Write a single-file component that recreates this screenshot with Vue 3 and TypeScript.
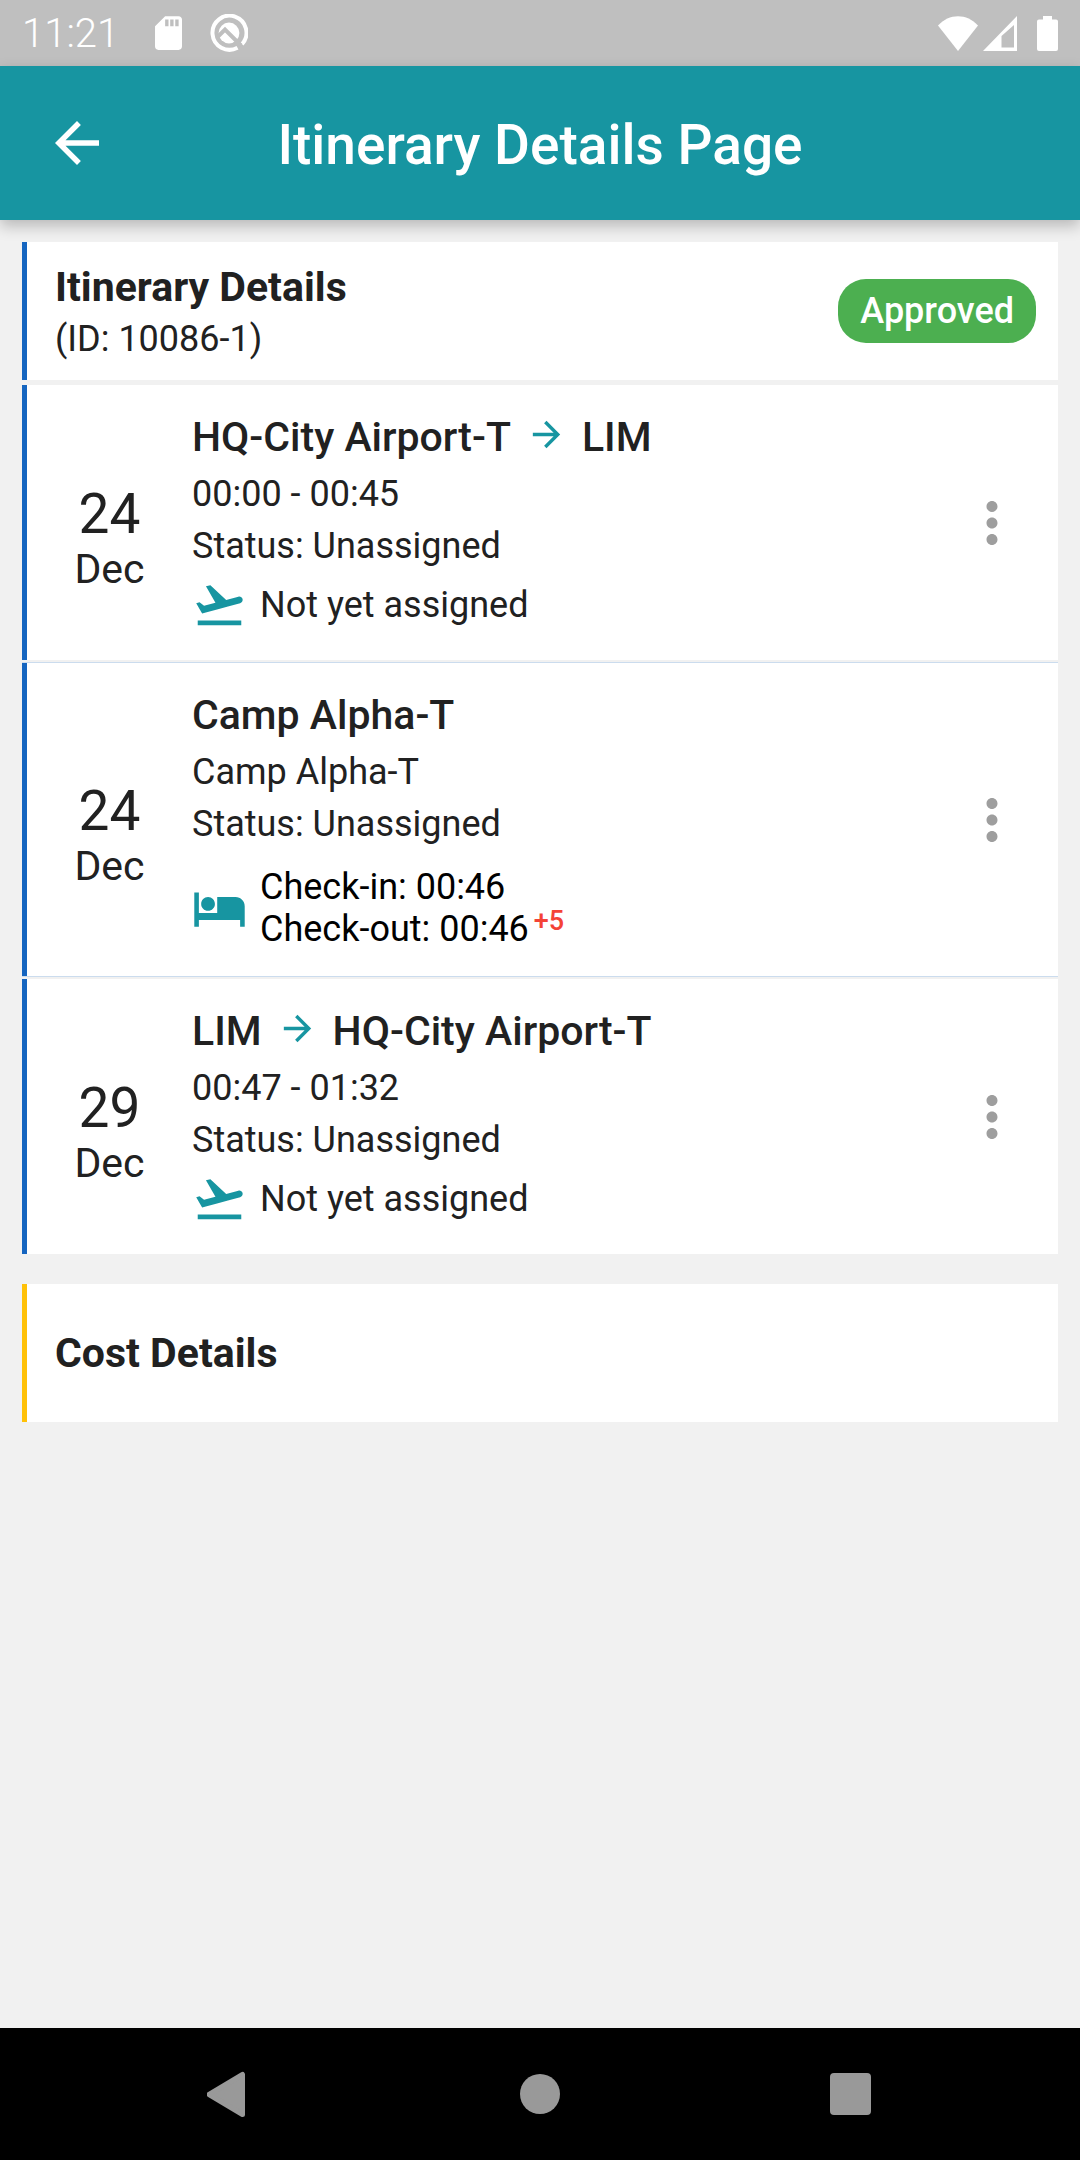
<script setup lang="ts">
interface Segment {
  kind: 'flight' | 'stay'
  day: string
  month: string
  from: string
  to?: string
  detail: string
  status: string
}

const segments: Segment[] = [
  { kind: 'flight', day: '24', month: 'Dec', from: 'HQ-City Airport-T', to: 'LIM', detail: '00:00 - 00:45', status: 'Unassigned' },
  { kind: 'stay', day: '24', month: 'Dec', from: 'Camp Alpha-T', detail: 'Camp Alpha-T', status: 'Unassigned' },
  { kind: 'flight', day: '29', month: 'Dec', from: 'LIM', to: 'HQ-City Airport-T', detail: '00:47 - 01:32', status: 'Unassigned' },
]
</script>

<template>
  <div class="screen">
    <div class="status-bar">
      <span class="clock">11:21</span>
      <svg class="sd" viewBox="4 2 16 20" aria-hidden="true">
        <path d="M18 2h-8L4.02 8 4 20c0 1.1.9 2 2 2h12c1.1 0 2-.9 2-2V4c0-1.1-.9-2-2-2zm-6 6h-2V4h2v4zm3 0h-2V4h2v4zm3 0h-2V4h2v4z" />
      </svg>
      <svg class="sync" viewBox="0 0 38 38" aria-hidden="true">
        <path class="ring" d="M27.5 33.7A17 17 0 1 1 32 30.2" />
        <circle cx="19" cy="19" r="10.4" />
        <path class="slash" d="M7.500 23l7.500-7.500L31 31.500" />
      </svg>
      <span class="spacer"></span>
      <svg class="wifi" viewBox="0 0 40 35" aria-hidden="true">
        <path d="M0 9.500C11-3 29-3 40 9.500L20 35z" />
      </svg>
      <svg class="signal" viewBox="0 0 34 35" aria-hidden="true">
        <path fill-rule="evenodd" d="M0 35L34 0V35zM18.500 20V31.500H31V9z" />
      </svg>
      <svg class="battery" viewBox="0 0 21 35" aria-hidden="true">
        <path d="M6 0h9v3.500h4a2 2 0 0 1 2 2V33a2 2 0 0 1-2 2H2a2 2 0 0 1-2-2V5.500a2 2 0 0 1 2-2h4z" />
      </svg>
    </div>

    <header class="app-bar">
      <button class="icon-button" type="button" aria-label="Back">
        <svg viewBox="0 0 24 24"><path d="M20 11H7.830l5.590-5.590L12 4l-8 8 8 8 1.410-1.410L7.830 13H20v-2z" /></svg>
      </button>
      <h1>Itinerary Details Page</h1>
    </header>

    <main>
      <section class="itinerary">
        <div class="card summary">
          <div>
            <h2>Itinerary Details</h2>
            <p>(ID: 10086-1)</p>
          </div>
          <span class="badge">Approved</span>
        </div>

        <ul class="segments">
          <li v-for="(segment, index) in segments" :key="index" :class="segment.kind">
            <article class="card segment">
              <div class="date">
                <span class="day">{{ segment.day }}</span>
                <span class="month">{{ segment.month }}</span>
              </div>
              <div class="info">
                <h3>
                  <span>{{ segment.from }}</span>
                  <template v-if="segment.to">
                    <svg class="arrow" viewBox="0 0 24 24" aria-label="to"><path d="M12 4l-1.410 1.410L16.170 11H4v2h12.170l-5.580 5.590L12 20l8-8z" /></svg>
                    <span>{{ segment.to }}</span>
                  </template>
                </h3>
                <p>{{ segment.detail }}</p>
                <p>Status: {{ segment.status }}</p>
                <div v-if="segment.kind === 'flight'" class="assignment">
                  <svg viewBox="0 0 24 24" aria-hidden="true">
                    <path d="M2.500 19h19v2h-19zm19.570-9.360c-.21-.8-1.040-1.280-1.840-1.060L14.920 10l-6.900-6.430-1.930.51 4.140 7.170-4.970 1.330-1.970-1.540-1.450.39 1.820 3.160.77 1.330 1.600-.43 5.310-1.420 4.350-1.160L21 11.490c.81-.23 1.280-1.050 1.070-1.850z" />
                  </svg>
                  <span>Not yet assigned</span>
                </div>
                <div v-else class="assignment hours">
                  <svg viewBox="0 0 24 24" aria-hidden="true">
                    <path d="M7 13c1.660 0 3-1.340 3-3S8.660 7 7 7s-3 1.340-3 3 1.340 3 3 3zm12-6h-8v7H3V5H1v15h2v-3h18v3h2v-9c0-2.210-1.790-4-4-4z" />
                  </svg>
                  <div>
                    <div>Check-in: 00:46</div>
                    <div>Check-out: 00:46<sup>+5</sup></div>
                  </div>
                </div>
              </div>
              <button class="icon-button more" type="button" aria-label="More options">
                <svg viewBox="0 0 24 24"><path d="M12 8c1.100 0 2-.9 2-2s-.9-2-2-2-2 .9-2 2 .9 2 2 2zm0 2c-1.100 0-2 .9-2 2s.9 2 2 2 2-.9 2-2-.9-2-2-2zm0 6c-1.100 0-2 .9-2 2s.9 2 2 2 2-.9 2-2-.9-2-2-2z" /></svg>
              </button>
            </article>
          </li>
        </ul>
      </section>

      <section class="card cost">
        <h2>Cost Details</h2>
      </section>
    </main>

    <nav class="nav-bar" aria-label="System">
      <button type="button" aria-label="Back">
        <svg viewBox="0 0 44 46"><path d="M35.500 3.500V43.500L2 23.500z" stroke-width="5" stroke-linejoin="round" /></svg>
      </button>
      <button type="button" aria-label="Home">
        <svg viewBox="0 0 44 46"><circle cx="22" cy="23" r="20" /></svg>
      </button>
      <button type="button" aria-label="Recents">
        <svg viewBox="0 0 44 46"><rect x="1" y="2" width="41" height="42" rx="4" /></svg>
      </button>
    </nav>
  </div>
</template>

<style>
body {
  margin: 0;
  background: #f1f1f1;
}
</style>

<style scoped>
.screen {
  display: flex;
  flex-direction: column;
  min-height: 100vh;
  background: #f1f1f1;
  color: #212121;
  font-family: Roboto, "Noto Sans", sans-serif;
  font-size: 36px;
  line-height: 42px;
}

h1,
h2,
h3,
p,
ul {
  margin: 0;
  padding: 0;
}

button {
  display: flex;
  align-items: center;
  justify-content: center;
  padding: 0;
  border: 0;
  background: none;
}

svg {
  display: block;
  flex: none;
  fill: currentColor;
}

.status-bar {
  display: flex;
  align-items: center;
  height: 66px;
  padding: 0 22px;
  background: #bfbfbf;
  color: #fff;
}

.clock {
  padding-top: 2px;
  font-size: 40px;
  font-weight: 300;
}

.sd {
  width: 27px;
  height: 34px;
  margin-left: 36px;
}

.sync {
  width: 38px;
  height: 38px;
  margin-left: 28px;
}

.ring {
  fill: none;
  stroke: #fff;
  stroke-width: 4;
}

.slash {
  fill: none;
  stroke: #bfbfbf;
  stroke-width: 4;
}

.spacer {
  flex: 1;
}

.wifi {
  width: 40px;
  height: 35px;
}

.signal {
  width: 34px;
  height: 35px;
  margin-left: 5px;
}

.battery {
  width: 21px;
  height: 35px;
  margin-left: 20px;
}

.app-bar {
  display: grid;
  grid-template-columns: 66px 1fr 66px;
  align-items: center;
  height: 154px;
  padding: 0 44px;
  background: #1795a1;
  color: #fff;
  box-shadow: 0 6px 14px rgba(0, 0, 0, 0.24);
}

.app-bar h1 {
  padding-top: 4px;
  font-size: 55px;
  font-weight: 500;
  line-height: 66px;
  text-align: center;
}

.icon-button {
  width: 66px;
  height: 66px;
  color: inherit;
}

.icon-button svg {
  width: 66px;
  height: 66px;
}

main {
  flex: 1;
  display: flex;
  flex-direction: column;
  gap: 30px;
  padding: 22px;
}

.card {
  display: flex;
  align-items: center;
  box-sizing: border-box;
  border-left: 5px solid #1565c0;
  background: #fff;
}

h2 {
  font-size: 41px;
  font-weight: 700;
  line-height: 48px;
}

.summary {
  justify-content: space-between;
  margin-bottom: 5px;
  padding: 21px 22px 15px 28px;
}

.summary p {
  margin-top: 2px;
  line-height: 52px;
}

.badge {
  margin-bottom: 6px;
  padding: 11px 22px;
  border-radius: 28px;
  background: #4caf50;
  color: #fff;
  font-weight: 500;
}

.segments {
  display: flex;
  flex-direction: column;
  gap: 2px;
  list-style: none;
}

.stay {
  border: solid #cbdcee;
  border-width: 1px 0;
}

.date {
  display: flex;
  flex-direction: column;
  align-items: center;
  width: 165px;
  padding-top: 28px;
}

.day {
  font-size: 55px;
  line-height: 64px;
}

.month {
  font-size: 41px;
  line-height: 46px;
}

.info {
  flex: 1;
  padding: 22px 0 28px;
}

.stay .info {
  padding-bottom: 26px;
}

.info h3 {
  display: flex;
  align-items: center;
  gap: 15px;
  margin-bottom: 1px;
  font-size: 41px;
  font-weight: 500;
  line-height: 60px;
}

.info p {
  line-height: 52px;
}

.arrow {
  width: 41px;
  height: 41px;
  margin-bottom: 6px;
  color: #1795a1;
}

.assignment {
  display: flex;
  align-items: center;
  gap: 13px;
  margin-top: 5px;
}

.assignment svg {
  width: 55px;
  height: 55px;
  color: #1795a1;
}

.hours {
  margin-top: 16px;
  color: #000;
}

sup {
  margin-left: 5px;
  color: #f44336;
  font-size: 27px;
  font-weight: 500;
  line-height: 0;
  vertical-align: 11px;
}

.more {
  margin-right: 33px;
  color: #9e9e9e;
}

.cost {
  min-height: 138px;
  padding-left: 28px;
  border-left-color: #ffc107;
}

.nav-bar {
  display: flex;
  justify-content: center;
  height: 132px;
  background: #000;
}

.nav-bar button {
  width: 28.8%;
  color: #999;
}

.nav-bar svg {
  width: 44px;
  height: 46px;
  stroke: currentColor;
  stroke-width: 0;
}
</style>
